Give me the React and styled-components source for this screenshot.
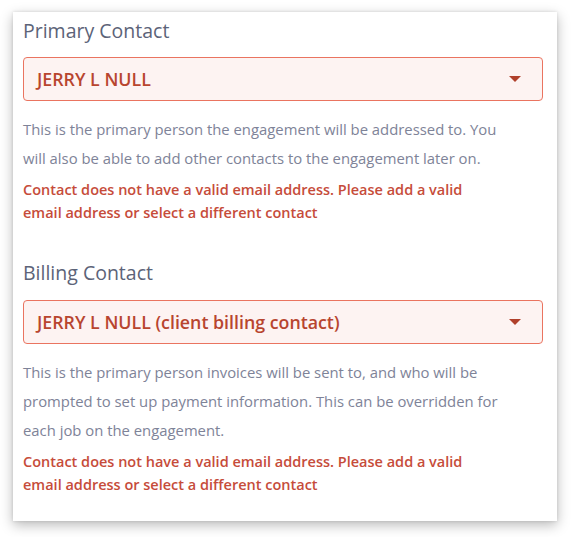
import React from "react";
import styled, { createGlobalStyle } from "styled-components";

const GlobalStyle = createGlobalStyle`
  html, body {
    margin: 0;
    padding: 0;
    background: #ffffff;
  }
  * {
    box-sizing: border-box;
  }
`;

const Page = styled.div`
  padding: 12px 16px 16px 13px;
  font-family: "Open Sans", "Lato", sans-serif;
`;

const Card = styled.section`
  width: 544px;
  background: #ffffff;
  padding: 8px 14px 25px 10px;
  box-shadow: 0 4px 12px rgba(0, 0, 0, 0.28), 0 0 3px rgba(0, 0, 0, 0.12);
`;

const Field = styled.div`
  & + & {
    margin-top: 38px;
  }
`;

const Label = styled.label`
  display: block;
  font-size: 19.5px;
  line-height: 22px;
  font-weight: 500;
  color: #5c6378;
`;

const Select = styled.div`
  margin-top: ${(p) => p.$gap || 15}px;
  height: 44px;
  display: flex;
  align-items: center;
  justify-content: space-between;
  padding: 0 21px 0 13px;
  background: #fdf3f2;
  border: 1px solid #ea7460;
  border-radius: 4px;
  color: #b8452f;
  font-size: 17.8px;
  font-weight: 600;
`;

const Caret = styled.span`
  width: 0;
  height: 0;
  border-left: 6px solid transparent;
  border-right: 6px solid transparent;
  border-top: 6px solid #b0402b;
`;

const Help = styled.p`
  margin: 14px 0 0;
  max-width: 482px;
  font-size: 14.85px;
  line-height: 29px;
  color: #7e8398;
`;

const Error = styled.p`
  margin: 5px 0 0;
  max-width: 472px;
  font-size: 14.5px;
  line-height: 23px;
  font-weight: 600;
  color: #c64c3a;
`;

const fields = [
  {
    label: "Primary Contact",
    value: "JERRY L NULL",
    gap: 15,
    help: "This is the primary person the engagement will be addressed to. You will also be able to add other contacts to the engagement later on.",
  },
  {
    label: "Billing Contact",
    value: "JERRY L NULL (client billing contact)",
    gap: 16,
    help: "This is the primary person invoices will be sent to, and who will be prompted to set up payment information. This can be overridden for each job on the engagement.",
  },
];

export default function App() {
  return (
    <Page>
      <GlobalStyle />
      <Card>
        {fields.map((f) => (
          <Field key={f.label}>
            <Label>{f.label}</Label>
            <Select $gap={f.gap}>
              <span>{f.value}</span>
              <Caret />
            </Select>
            <Help>{f.help}</Help>
            <Error>
              Contact does not have a valid email address. Please add a valid
              email address or select a different contact
            </Error>
          </Field>
        ))}
      </Card>
    </Page>
  );
}
